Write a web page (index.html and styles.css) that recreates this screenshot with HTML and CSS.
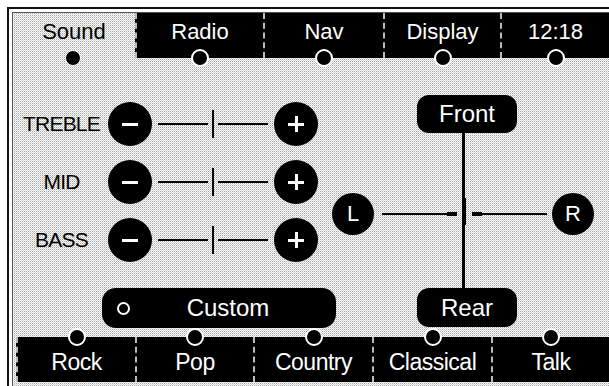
FILE: index.html
```html
<!DOCTYPE html>
<html lang="en">
<head>
  <meta charset="utf-8">
  <title>Sound</title>
  <link rel="stylesheet" href="styles.css">
</head>
<body>
<div class="frame">
  <div class="screen">
    <nav class="tabs">
      <div class="tab active">Sound<span class="dot"></span></div>
      <div class="tab t-radio">Radio<span class="dot"></span></div>
      <div class="tab t-nav">Nav<span class="dot"></span></div>
      <div class="tab t-display">Display<span class="dot"></span></div>
      <div class="tab t-clock">12:18<span class="dot"></span></div>
    </nav>

    <main class="main">
      <section class="tone">
        <div class="tone-row">
          <span class="tone-label">TREBLE</span>
          <span class="knob minus"></span>
          <span class="slider"><i class="rail"></i><i class="tick"></i><i class="rail"></i></span>
          <span class="knob plus"></span>
        </div>
        <div class="tone-row">
          <span class="tone-label">MID</span>
          <span class="knob minus"></span>
          <span class="slider"><i class="rail"></i><i class="tick"></i><i class="rail"></i></span>
          <span class="knob plus"></span>
        </div>
        <div class="tone-row">
          <span class="tone-label">BASS</span>
          <span class="knob minus"></span>
          <span class="slider"><i class="rail"></i><i class="tick"></i><i class="rail"></i></span>
          <span class="knob plus"></span>
        </div>
        <div class="custom"><span class="ring"></span><span class="custom-name">Custom</span></div>
      </section>

      <section class="balance">
        <div class="pill front">Front</div>
        <div class="axis"></div>
        <div class="side left">L</div>
        <svg class="cross" width="178" height="42" viewBox="0 0 178 42">
          <rect x="8" y="20" width="65" height="2"/>
          <rect x="73" y="19" width="10" height="4"/>
          <rect x="88" y="5" width="4" height="27"/>
          <rect x="98" y="19" width="10" height="4"/>
          <rect x="108" y="20" width="65" height="2"/>
        </svg>
        <div class="side right">R</div>
        <div class="pill rear">Rear</div>
      </section>
    </main>

    <footer class="presets">
      <div class="preset p-rock">Rock<span class="dot"></span></div>
      <div class="preset p-pop">Pop<span class="dot"></span></div>
      <div class="preset p-country">Country<span class="dot"></span></div>
      <div class="preset p-classical">Classical<span class="dot"></span></div>
      <div class="preset p-talk">Talk<span class="dot"></span></div>
    </footer>
  </div>
</div>
</body>
</html>
```

FILE: styles.css
```css
* { box-sizing: border-box; }

body {
  margin: 0;
  background: #fff;
  font-family: "Liberation Sans", Arial, sans-serif;
  overflow: hidden;
}

.frame {
  margin: 7px 0 0 7px;
  height: 379px;
  border-left: 2px solid #111;
  border-top: 2px solid #111;
  padding: 3px 0 0 3px;
}

.screen {
  height: 100%;
  border-left: 1px solid #555;
  border-top: 1px solid #555;
  background-color: #e2e2e2;
  background-image: conic-gradient(#a4a4a4 25%, #fff 0 50%, #d4d4d4 0 75%, #fff 0);
  background-size: 2px 2px;
  display: flex;
  flex-direction: column;
}

/* top tabs */
.tabs { display: flex; height: 45px; }
.tab {
  position: relative;
  display: flex;
  justify-content: center;
  padding-top: 8px;
  font-size: 22px;
  line-height: 22px;
  color: #fff;
  background: #000;
  border-left: 2px dashed #bbb;
}
.tab.active { width: 122px; color: #000; background: transparent; border-left: 0; }
.t-radio { width: 128px; }
.t-nav { width: 120px; }
.t-display { width: 117px; }
.t-clock { flex: 1; }

.dot {
  position: absolute;
  left: 50%;
  width: 18px;
  height: 18px;
  margin-left: -9px;
  border: 2px solid #fff;
  border-radius: 50%;
  background: #000;
  z-index: 2;
}
.tab .dot { bottom: -9px; }
.tab.active .dot { width: 16px; height: 16px; margin-left: -9px; bottom: -8px; border-width: 1px; }

/* middle area */
.main { display: flex; height: 279px; }

.tone { width: 319px; padding-top: 44px; }
.tone-row { display: flex; align-items: center; height: 44px; margin-bottom: 14px; }
.tone-row:nth-child(3) { margin-bottom: 0; }
.tone-label {
  width: 95px;
  padding-left: 2px;
  text-align: center;
  font-size: 21px;
  letter-spacing: -0.8px;
  color: #000;
}

.knob {
  display: grid;
  place-items: center;
  width: 44px;
  height: 44px;
  border-radius: 50%;
  background: #000;
}
.knob::before, .knob::after { content: ""; grid-area: 1 / 1; background: #fff; }
.knob::before { width: 16px; height: 3px; }
.plus::after { width: 3px; height: 16px; }
.minus::after { display: none; }

.slider { display: flex; align-items: center; width: 122px; padding: 0 6px; }
.rail { display: block; width: 50px; height: 2px; background: #000; }
.tick { display: block; width: 2px; height: 28px; margin: 0 4px; background: #000; }

.custom {
  display: flex;
  align-items: center;
  width: 234px;
  height: 40px;
  margin: 26px 0 0 89px;
  padding-right: 10px;
  border-radius: 14px;
  background: #000;
  color: #fff;
}
.ring {
  width: 13px;
  height: 13px;
  margin-left: 15px;
  border: 2px solid #fff;
  border-radius: 50%;
}
.custom-name { flex: 1; text-align: center; font-size: 24px; }

/* balance / fade */
.balance {
  display: grid;
  grid-template-columns: 42px 1fr 42px;
  grid-template-rows: 38px 60px 42px 53px 39px;
  width: 262px;
  height: 232px;
  margin-top: 37px;
}
.pill {
  grid-column: 2;
  justify-self: center;
  display: flex;
  align-items: center;
  justify-content: center;
  width: 100px;
  margin-left: 8px;
  border-radius: 12px;
  background: #000;
  color: #fff;
  font-size: 24px;
}
.front { grid-row: 1; }
.rear { grid-row: 5; }
.axis { grid-column: 2; grid-row: 2 / 5; justify-self: center; width: 3px; background: #000; }
.cross { grid-column: 2; grid-row: 3; fill: #000; }
.side {
  grid-row: 3;
  display: flex;
  align-items: center;
  justify-content: center;
  width: 42px;
  height: 42px;
  border-radius: 50%;
  background: #000;
  color: #fff;
  font-size: 22px;
}
.left { grid-column: 1; }
.right { grid-column: 3; }

/* bottom presets */
.presets { display: flex; height: 45px; margin-left: 3px; }
.preset {
  position: relative;
  display: flex;
  justify-content: center;
  padding-top: 14px;
  font-size: 23px;
  line-height: 23px;
  letter-spacing: -0.5px;
  color: #fff;
  background: #000;
  border-left: 2px dashed #bbb;
}
.preset .dot { top: -9px; }
.p-rock { width: 119px; }
.p-pop { width: 118px; }
.p-country { width: 119px; }
.p-classical { width: 119px; }
.p-talk { flex: 1; }
```
